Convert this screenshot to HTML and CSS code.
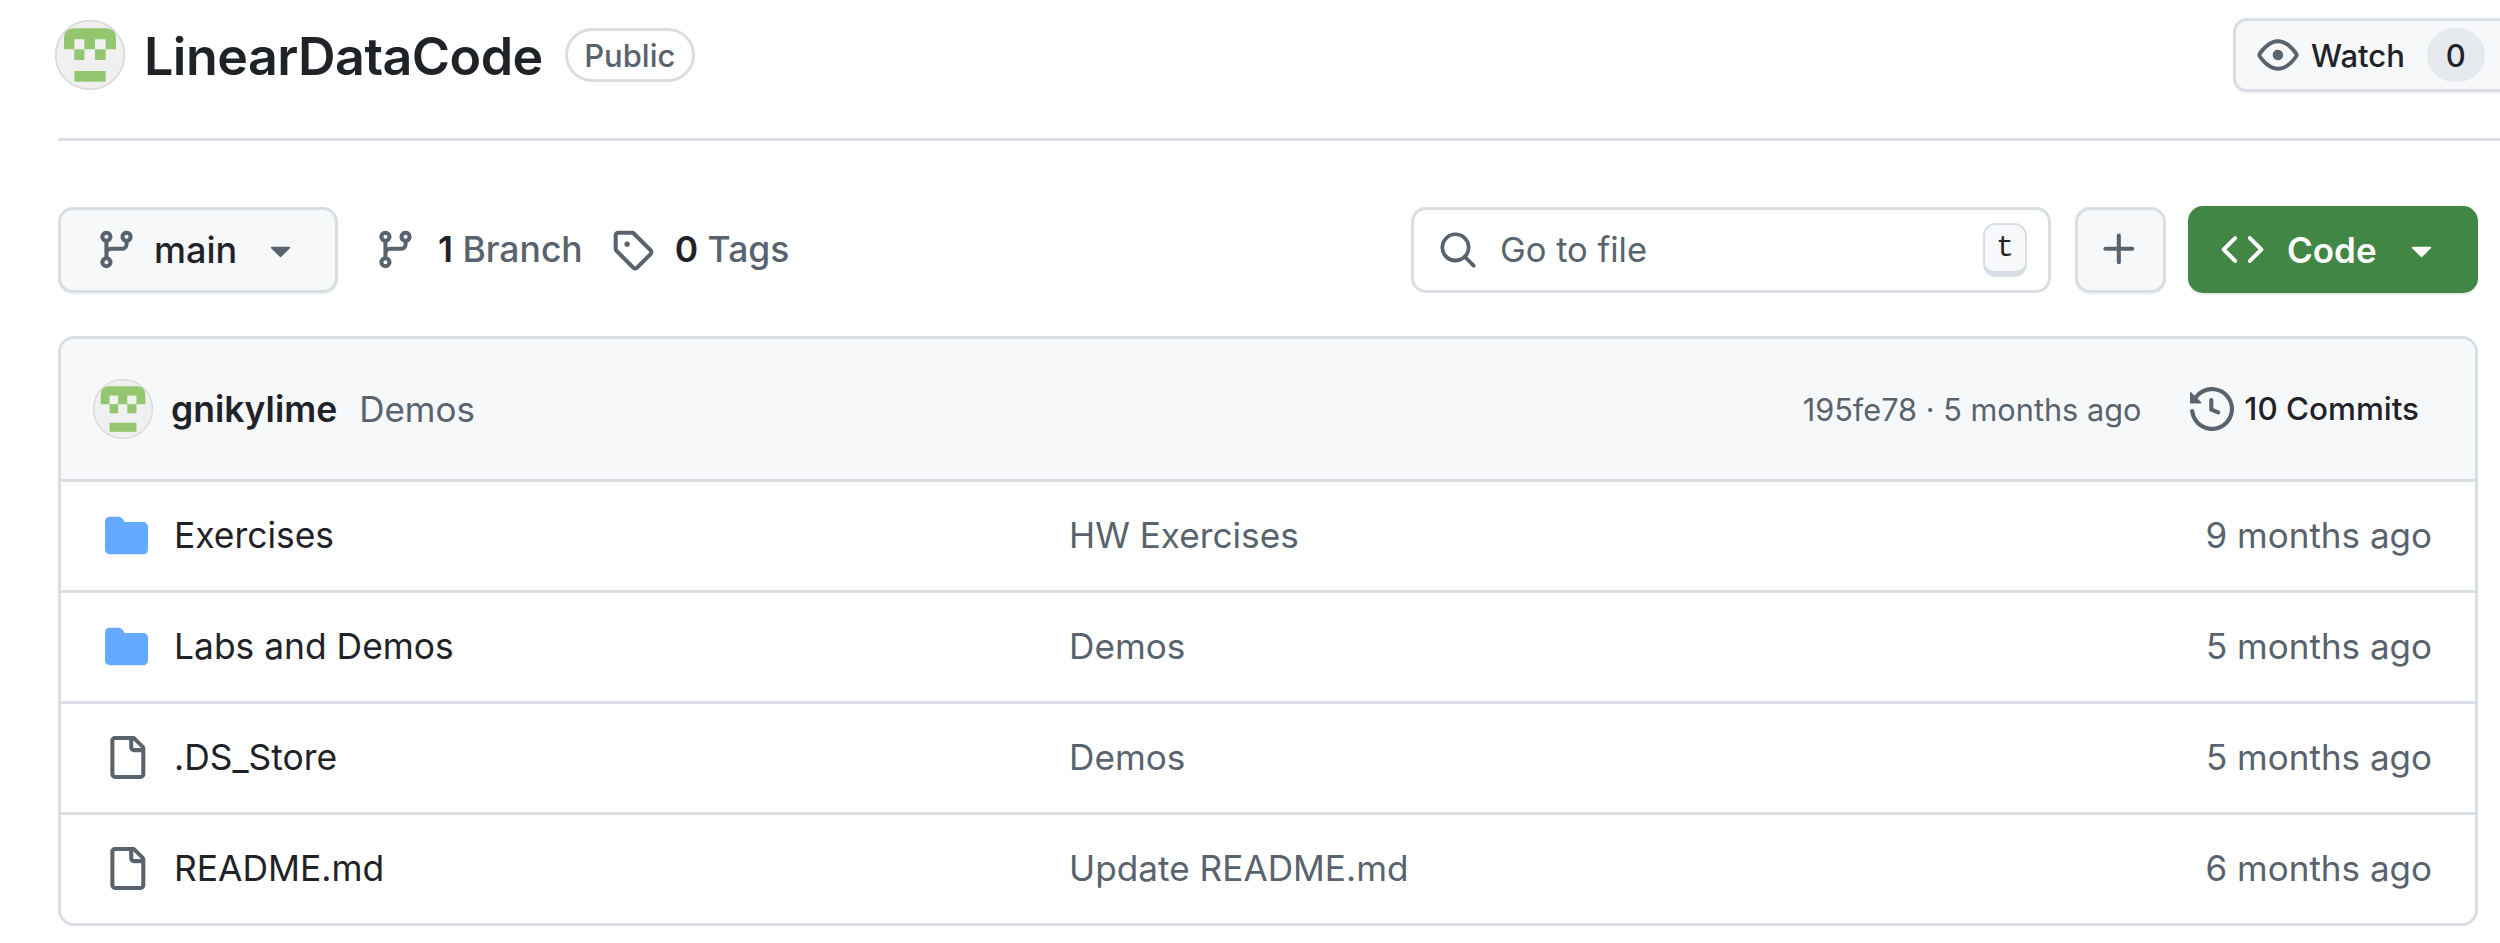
FILE: index.html
```html
<!DOCTYPE html>
<html lang="en">
<head>
<meta charset="utf-8">
<title>LinearDataCode</title>
<link rel="stylesheet" href="styles.css">
</head>
<body>
<svg class="defs" width="0" height="0" aria-hidden="true">
  <symbol id="i-branch" viewBox="0 0 16 16"><path d="M9.5 3.25a2.25 2.25 0 1 1 3 2.122V6A2.5 2.5 0 0 1 10 8.5H6a1 1 0 0 0-1 1v1.128a2.251 2.251 0 1 1-1.5 0V5.372a2.25 2.25 0 1 1 1.5 0v1.836A2.493 2.493 0 0 1 6 7h4a1 1 0 0 0 1-1v-.628A2.25 2.25 0 0 1 9.5 3.25Zm-6 0a.75.75 0 1 0 1.5 0 .75.75 0 0 0-1.5 0Zm8.25-.75a.75.75 0 1 0 0 1.5.75.75 0 0 0 0-1.5ZM4.25 12a.75.75 0 1 0 0 1.5.75.75 0 0 0 0-1.5Z"/></symbol>
  <symbol id="i-caret" viewBox="0 0 16 16"><path d="m4.427 7.427 3.396 3.396a.25.25 0 0 0 .354 0l3.396-3.396A.25.25 0 0 0 11.396 7H4.604a.25.25 0 0 0-.177.427Z"/></symbol>
  <symbol id="i-folder" viewBox="0 0 16 16"><path d="M1.75 1A1.75 1.75 0 0 0 0 2.75v10.5C0 14.216.784 15 1.75 15h12.5A1.75 1.75 0 0 0 16 13.25v-8.5A1.75 1.75 0 0 0 14.25 3H7.5a.25.25 0 0 1-.2-.1l-.9-1.2C6.07 1.26 5.55 1 5 1H1.75Z"/></symbol>
  <symbol id="i-file" viewBox="0 0 16 16"><path d="M2 1.75C2 .784 2.784 0 3.75 0h6.586c.464 0 .909.184 1.237.513l2.914 2.914c.329.328.513.773.513 1.237v9.586A1.75 1.75 0 0 1 13.25 16h-9.5A1.75 1.75 0 0 1 2 14.25Zm1.75-.25a.25.25 0 0 0-.25.25v12.5c0 .138.112.25.25.25h9.5a.25.25 0 0 0 .25-.25V6h-2.75A1.75 1.75 0 0 1 9 4.25V1.5Zm6.75.062V4.25c0 .138.112.25.25.25h2.688l-.011-.013-2.914-2.914-.013-.011Z"/></symbol>
  <symbol id="i-avatar" viewBox="45 30 210 210">
    <circle cx="150" cy="135" r="103" fill="#f0f0f0" stroke="#d9d9d9" stroke-width="5"/>
    <path fill="#93c66f" d="M72 118V85Q72 55 102 55H198Q228 55 228 85V118H197V88H165V118H133V88H103V118Z"/>
    <rect x="103" y="118" width="30" height="32" fill="#93c66f"/>
    <rect x="165" y="118" width="32" height="32" fill="#93c66f"/>
    <rect x="103" y="183" width="94" height="32" fill="#93c66f"/>
  </symbol>
</svg>

<main class="page">
  <header class="repo-head">
    <svg class="avatar-lg"><use href="#i-avatar"/></svg>
    <h1 class="repo-name">LinearDataCode</h1>
    <span class="badge">Public</span>
    <div class="watch">
      <svg class="icon icon-eye" viewBox="0 0 16 16"><path d="M8 2c1.981 0 3.671.992 4.933 2.078 1.27 1.091 2.187 2.345 2.637 3.023a1.62 1.62 0 0 1 0 1.798c-.45.678-1.367 1.932-2.637 3.023C11.67 13.008 9.981 14 8 14c-1.981 0-3.671-.992-4.933-2.078C1.797 10.83.88 9.576.43 8.898a1.62 1.62 0 0 1 0-1.798c.45-.677 1.367-1.931 2.637-3.022C4.33 2.992 6.019 2 8 2ZM1.679 7.932a.12.12 0 0 0 0 .136c.411.622 1.241 1.75 2.366 2.717C5.176 11.758 6.527 12.5 8 12.5c1.473 0 2.825-.742 3.955-1.715 1.124-.967 1.954-2.096 2.366-2.717a.12.12 0 0 0 0-.136c-.412-.621-1.242-1.75-2.366-2.717C10.824 4.242 9.473 3.5 8 3.5c-1.473 0-2.825.742-3.955 1.715-1.124.967-1.954 2.096-2.366 2.717ZM8 10a2 2 0 1 1-.001-3.999A2 2 0 0 1 8 10Z"/></svg>
      <span class="watch-label">Watch</span>
      <span class="counter">0</span>
    </div>
  </header>

  <section class="toolbar">
    <div class="btn btn-branch">
      <svg class="icon"><use href="#i-branch"/></svg>
      <span class="branch-name">main</span>
      <svg class="icon caret"><use href="#i-caret"/></svg>
    </div>
    <div class="stat stat-branch">
      <svg class="icon"><use href="#i-branch"/></svg>
      <span><b>1</b> Branch</span>
    </div>
    <div class="stat stat-tag">
      <svg class="icon" viewBox="0 0 16 16"><path d="M1 7.775V2.75C1 1.784 1.784 1 2.75 1h5.025c.464 0 .91.184 1.238.513l6.25 6.25a1.75 1.75 0 0 1 0 2.474l-5.026 5.026a1.75 1.75 0 0 1-2.474 0l-6.25-6.25A1.752 1.752 0 0 1 1 7.775Zm1.5 0c0 .066.026.13.073.177l6.25 6.25a.25.25 0 0 0 .354 0l5.025-5.025a.25.25 0 0 0 0-.354l-6.25-6.25a.25.25 0 0 0-.177-.073H2.75a.25.25 0 0 0-.25.25ZM6 5a1 1 0 1 1 0 2 1 1 0 0 1 0-2Z"/></svg>
      <span><b>0</b> Tags</span>
    </div>
    <div class="search">
      <svg class="icon" viewBox="0 0 16 16"><path d="M10.68 11.74a6 6 0 0 1-7.922-8.982 6 6 0 0 1 8.982 7.922l3.04 3.04a.749.749 0 0 1-.326 1.275.749.749 0 0 1-.734-.215ZM11.5 7a4.499 4.499 0 1 0-8.997 0A4.499 4.499 0 0 0 11.5 7Z"/></svg>
      <span class="search-text">Go to file</span>
      <kbd class="key">t</kbd>
    </div>
    <div class="btn btn-plus">
      <svg class="icon" viewBox="0 0 16 16"><path d="M7.75 2a.75.75 0 0 1 .75.75V7h4.25a.75.75 0 0 1 0 1.5H8.5v4.25a.75.75 0 0 1-1.5 0V8.5H2.75a.75.75 0 0 1 0-1.5H7V2.75A.75.75 0 0 1 7.75 2Z"/></svg>
    </div>
    <div class="btn-code">
      <svg class="icon" viewBox="0 0 16 16"><path d="m11.28 3.22 4.25 4.25a.75.75 0 0 1 0 1.06l-4.25 4.25a.749.749 0 0 1-1.275-.326.749.749 0 0 1 .215-.734L13.94 8l-3.72-3.72a.749.749 0 0 1 .326-1.275.749.749 0 0 1 .734.215Zm-6.56 0a.751.751 0 0 1 1.042.018.751.751 0 0 1 .018 1.042L2.06 8l3.72 3.72a.749.749 0 0 1-.326 1.275.749.749 0 0 1-.734-.215L.47 8.53a.75.75 0 0 1 0-1.06Z"/></svg>
      <span class="code-label">Code</span>
      <svg class="icon caret"><use href="#i-caret"/></svg>
    </div>
  </section>

  <section class="files">
    <div class="commit-bar">
      <svg class="avatar-sm"><use href="#i-avatar"/></svg>
      <span class="author">gnikylime</span>
      <span class="commit-msg">Demos</span>
      <span class="commit-meta">195fe78 · 5 months ago</span>
      <svg class="icon icon-history" viewBox="0 0 16 16"><path d="m.427 1.927 1.215 1.215a8.002 8.002 0 1 1-1.6 5.685.75.75 0 1 1 1.493-.154 6.5 6.5 0 1 0 1.18-4.458l1.358 1.358A.25.25 0 0 1 3.896 6H.25A.25.25 0 0 1 0 5.75V2.104a.25.25 0 0 1 .427-.177ZM7.75 4a.75.75 0 0 1 .75.75v2.992l2.028.812a.75.75 0 0 1-.557 1.392l-2.5-1A.751.751 0 0 1 7 8.25v-3.5A.75.75 0 0 1 7.75 4Z"/></svg>
      <span class="commit-count">10 Commits</span>
    </div>
    <div class="row">
      <svg class="icon icon-folder"><use href="#i-folder"/></svg>
      <span class="name">Exercises</span>
      <span class="msg">HW Exercises</span>
      <span class="age">9 months ago</span>
    </div>
    <div class="row">
      <svg class="icon icon-folder"><use href="#i-folder"/></svg>
      <span class="name">Labs and Demos</span>
      <span class="msg">Demos</span>
      <span class="age">5 months ago</span>
    </div>
    <div class="row">
      <svg class="icon"><use href="#i-file"/></svg>
      <span class="name">.DS_Store</span>
      <span class="msg">Demos</span>
      <span class="age">5 months ago</span>
    </div>
    <div class="row">
      <svg class="icon"><use href="#i-file"/></svg>
      <span class="name">README.md</span>
      <span class="msg">Update README.md</span>
      <span class="age">6 months ago</span>
    </div>
  </section>
</main>
</body>
</html>
```

FILE: styles.css
```css
* { box-sizing: border-box; }

html, body {
  margin: 0;
  height: 100%;
  overflow: hidden;
  background: #fff;
}

body {
  font-family: Inter, "Liberation Sans", sans-serif;
  color: #1f2328;
}

.defs { position: absolute; }

.page {
  width: 2500px;
  padding: 0 22px 0 58px;
}

.icon {
  width: 43px;
  height: 43px;
  fill: #59636e;
  flex: none;
}

/* repository head */
.repo-head {
  display: flex;
  align-items: center;
  height: 141px;
  padding: 15px 0 43px;
  border-bottom: 3px solid #d8dee4;
  margin-right: -22px;
}

.avatar-lg {
  width: 70px;
  height: 70px;
  margin-left: -3px;
  flex: none;
}

.repo-name {
  margin: 3px 0 0 19px;
  font-size: 52px;
  font-weight: 600;
  line-height: 60px;
  letter-spacing: -0.55px;
}

.badge {
  margin-left: 22px;
  height: 54px;
  width: 130px;
  display: flex;
  align-items: center;
  justify-content: center;
  border: 3px solid #d8dee4;
  border-radius: 27px;
  font-size: 31px;
  font-weight: 500;
  color: #59636e;
}

.watch {
  margin-left: auto;
  width: 267px;
  height: 74px;
  display: flex;
  align-items: center;
  padding-left: 21px;
  background: #f6f8fa;
  border: 3px solid #d8dee4;
  border-right: 0;
  border-radius: 14px 0 0 14px;
  box-shadow: 0 2px 0 rgba(31, 35, 40, 0.05);
}

.icon-eye { width: 42px; height: 42px; }

.watch-label {
  margin-left: 12px;
  font-size: 31px;
  font-weight: 500;
}

.counter {
  margin-left: 22px;
  width: 58px;
  height: 54px;
  display: flex;
  align-items: center;
  justify-content: center;
  border-radius: 27px;
  background: #e6eaef;
  font-size: 31px;
  font-weight: 500;
}

/* toolbar */
.toolbar {
  display: flex;
  align-items: center;
  height: 87px;
  margin-top: 65px;
}

.btn {
  display: flex;
  align-items: center;
  height: 86px;
  background: #f6f8fa;
  border: 3px solid #d8dee4;
  border-radius: 15px;
  box-shadow: 0 2px 0 rgba(31, 35, 40, 0.05);
}

.btn-branch {
  width: 280px;
  padding-left: 34px;
}

.branch-name {
  margin-left: 16px;
  font-size: 36px;
  font-weight: 500;
}

.caret {
  width: 43px;
  height: 43px;
}

.btn-branch .caret { margin-left: 22px; }

.stat {
  display: flex;
  align-items: center;
  font-size: 35.5px;
  font-weight: 500;
  color: #59636e;
}

.stat b {
  font-weight: 600;
  color: #1f2328;
}

.stat-branch { margin-left: 36px; }
.stat-branch span { margin-left: 21px; }
.stat-tag { margin-left: 28px; }
.stat-tag span { margin-left: 21px; }

.search {
  margin-left: auto;
  width: 640px;
  height: 86px;
  display: flex;
  align-items: center;
  padding: 0 21px 0 24px;
  border: 3px solid #d8dee4;
  border-radius: 15px;
  background: #fff;
}

.search .icon { width: 40px; height: 40px; }

.search-text {
  margin-left: 22px;
  font-size: 34.5px;
  color: #59636e;
}

.key {
  margin-left: auto;
  width: 44px;
  height: 54px;
  display: flex;
  align-items: center;
  justify-content: center;
  background: #f6f8fa;
  border: 2px solid #d8dee4;
  border-bottom-width: 6px;
  border-radius: 13px;
  font-family: "Liberation Mono", monospace;
  font-size: 30px;
}

.btn-plus {
  margin-left: 24px;
  width: 91px;
  padding-right: 2px;
  justify-content: center;
}

.btn-code {
  margin-left: 22px;
  width: 290px;
  height: 87px;
  display: flex;
  align-items: center;
  padding-left: 33px;
  background: #428645;
  border-radius: 15px;
  box-shadow: 0 2px 1px rgba(31, 35, 40, 0.1);
  color: #fff;
}

.btn-code .icon { fill: #fff; }

.code-label {
  margin-left: 23px;
  font-size: 35px;
  font-weight: 600;
}

.btn-code .caret { margin-left: 23px; }

/* file table */
.files {
  margin-top: 43px;
  border: 3px solid #d8dee4;
  border-radius: 16px;
  overflow: hidden;
}

.commit-bar {
  display: flex;
  align-items: center;
  height: 140px;
  padding: 0 56px 0 32px;
  background: #f6f8fa;
}

.avatar-sm {
  width: 60px;
  height: 60px;
  flex: none;
}

.author {
  margin-left: 18px;
  font-size: 35.5px;
  font-weight: 600;
}

.commit-msg {
  margin-left: 22px;
  font-size: 35px;
  color: #59636e;
}

.commit-meta {
  margin-left: auto;
  font-size: 30.7px;
  color: #59636e;
}

.icon-history {
  margin-left: 49px;
  width: 44px;
  height: 44px;
}

.commit-count {
  margin-left: 10px;
  font-size: 31.4px;
  font-weight: 500;
}

.row {
  display: flex;
  align-items: center;
  height: 111px;
  padding: 0 43px 2px 44px;
  border-top: 3px solid #d8dee4;
}

.icon-folder { fill: #66aaff; }

.name {
  margin-left: 26px;
  width: 895px;
  font-size: 35.4px;
}

.msg {
  font-size: 35.2px;
  color: #59636e;
}

.age {
  margin-left: auto;
  font-size: 35px;
  color: #59636e;
}
```
